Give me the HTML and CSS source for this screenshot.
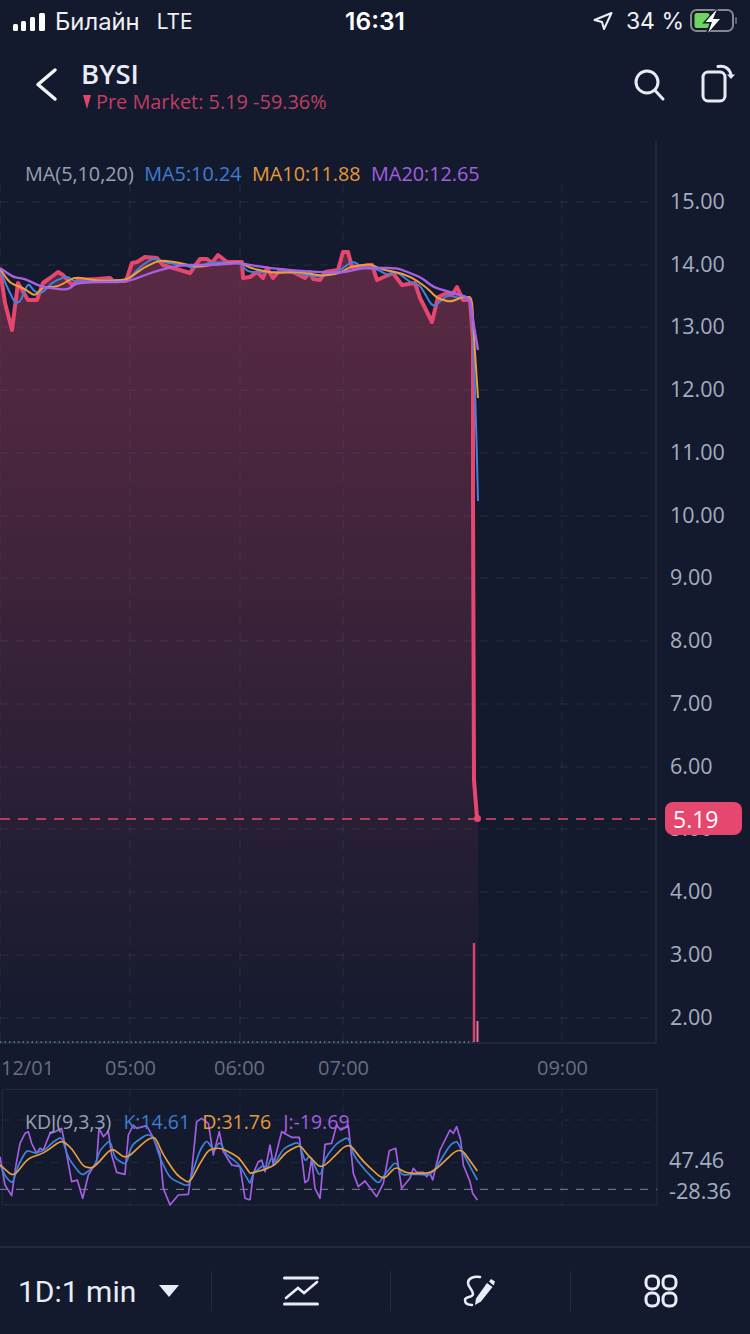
FILE: index.html
```html
<!DOCTYPE html>
<html lang="en">
<head>
    <meta charset="UTF-8">
    <meta name="viewport" content="width=device-width, initial-scale=1.0">
    <title>BYSI Chart</title>
    <link rel="stylesheet" href="styles.css">
</head>
<body>
    <div class="app">
        <div class="status-bar">
            <div class="status-left">
                <svg class="signal" width="36" height="24" viewBox="0 0 36 24">
                    <rect x="1" y="15" width="5" height="7" rx="1.5"/>
                    <rect x="9" y="12" width="5" height="10" rx="1.5"/>
                    <rect x="18" y="8" width="5" height="14" rx="1.5"/>
                    <rect x="27" y="4" width="6" height="18" rx="1.5"/>
                </svg>
                <span class="carrier">Билайн</span>
                <span class="network">LTE</span>
            </div>
            <div class="clock">16:31</div>
            <div class="status-right">
                <svg class="location" width="20" height="20" viewBox="0 0 20 20">
                    <path d="M1.500 9 18.500 2 11 18 9 11z"/>
                </svg>
                <span class="battery-text">34 %</span>
                <svg class="battery" width="48" height="26" viewBox="0 0 48 26">
                    <rect x="1" y="2" width="42" height="21" rx="5.5" class="battery-case"/>
                    <rect x="4.5" y="5" width="15" height="15" rx="2.5" class="battery-level"/>
                    <path d="M27 1 14.500 14.500h6.500L17 25l13-14h-7z" class="battery-gap"/>
                    <path d="M27 1 15.500 14h6.500L18 25l12-14h-7z" class="battery-bolt"/>
                    <rect x="45" y="9" width="2" height="7" rx="1" class="battery-nub"/>
                </svg>
            </div>
        </div>

        <header class="header">
            <svg class="back" width="24" height="36" viewBox="0 0 24 36">
                <path d="M21 3 4 17.500 21 32"/>
            </svg>
            <div class="title-block">
                <div class="symbol">BYSI</div>
                <div class="quote"><span class="quote-arrow"></span>Pre Market: 5.19 -59.36%</div>
            </div>
            <div class="header-icons">
                <svg width="34" height="36" viewBox="0 0 34 36" class="icon-line">
                    <circle cx="13" cy="15" r="11"/>
                    <path d="M21 23.500 29 32"/>
                </svg>
                <svg width="36" height="40" viewBox="0 0 36 40" class="icon-line">
                    <rect x="2" y="9" width="22" height="29" rx="5"/>
                    <path d="M17 3.500C24 2 29 6 30 12"/>
                    <path d="M26 11.500h8L30 16z" class="icon-fill"/>
                </svg>
            </div>
        </header>

        <section class="chart">
            <div class="legend ma-legend">
                <span class="tone-label">MA(5,10,20)</span>
                <span class="tone-blue">MA5:10.24</span>
                <span class="tone-orange">MA10:11.88</span>
                <span class="tone-purple">MA20:12.65</span>
            </div>
            <svg class="chart-svg" width="750" height="945" viewBox="0 140 750 945">
                <defs>
                    <linearGradient id="areaFill" gradientUnits="userSpaceOnUse" x1="0" y1="240" x2="0" y2="1010">
                        <stop offset="0" stop-color="#5c2a44"/>
                        <stop offset="1" stop-color="#171b2f"/>
                    </linearGradient>
                </defs>

                <polygon fill="url(#areaFill)" points="0,269 5,303 12,330 18,283 28,300 37,300 43,283 50,278 58,272 63,275 72,285 78,280 97,279 110,278 113,281 126,281 132,263 137,262 145,257 157,258 163,265 180,270 190,273 200,259 207,259 212,263 218,255 227,262 242,262 243,278 250,277 257,272 263,278 267,268 273,278 280,270 293,272 305,278 310,272 313,279 320,280 325,272 338,270 343,252 348,252 352,267 372,265 377,280 393,273 402,285 415,283 420,298 432,322 438,297 447,293 452,295 457,287 463,300 470,300 473,340 473,500 474,780 478,818 478,1043 0,1043"/>

                <g class="grid">
                    <path d="M0 202H656M0 265H656M0 327H656M0 390H656M0 453H656M0 516H656M0 578H656M0 641H656M0 704H656M0 767H656M0 829H656M0 892H656M0 955H656M0 1018H656"/>
                    <path d="M0 185V1043M130 185V1043M240 185V1043M343 185V1043M562 185V1043"/>
                </g>
                <path class="frame" d="M656 140V1043H0"/>

                <path class="volume-dots" d="M0 1042H473"/>
                <path class="volume-big" d="M474 943V1042"/>
                <path class="volume-small" d="M477.500 1021V1042"/>

                <polyline class="line-price" points="0,269 5,303 12,330 18,283 28,300 37,300 43,283 50,278 58,272 63,275 72,285 78,280 97,279 110,278 113,281 126,281 132,263 137,262 145,257 157,258 163,265 180,270 190,273 200,259 207,259 212,263 218,255 227,262 242,262 243,278 250,277 257,272 263,278 267,268 273,278 280,270 293,272 305,278 310,272 313,279 320,280 325,272 338,270 343,252 348,252 352,267 372,265 377,280 393,273 402,285 415,283 420,298 432,322 438,297 447,293 452,295 457,287 463,300 470,300 473,340 473,500 474,780 477,818"/>
                <polyline class="smooth line-ma line-blue" points="0,269 7,287 15,303 20,302 28,283 35,292 42,293 53,282 67,276 75,282 93,281 113,280 127,281 140,267 153,258 167,263 183,265 193,268 213,262 240,263 248,272 270,272 293,272 317,277 337,272 353,261 363,268 377,269 387,275 397,272 410,282 420,285 433,308 447,295 460,298 470,298 473,330 476,420 478,501"/>
                <polyline class="smooth line-ma line-orange" points="0,269 10,283 23,288 35,296 43,287 57,287 75,277 100,281 127,280 143,268 160,260 180,263 197,267 213,265 240,262 250,268 273,273 300,272 323,276 340,273 350,267 370,264 383,270 397,272 413,278 427,288 437,298 450,302 463,297 472,297 474,337 478,398"/>
                <polyline class="smooth line-ma line-purple" points="0,268 13,277 25,279 42,287 67,290 77,283 97,282 127,282 153,272 180,265 213,265 240,263 250,265 270,268 300,271 340,273 363,268 397,268 410,273 422,278 433,287 453,293 470,298 473,320 478,350"/>

                <text class="axis-y" x="670" y="209">15.00</text>
                <text class="axis-y" x="670" y="272">14.00</text>
                <text class="axis-y" x="670" y="334">13.00</text>
                <text class="axis-y" x="670" y="397">12.00</text>
                <text class="axis-y" x="670" y="460">11.00</text>
                <text class="axis-y" x="670" y="523">10.00</text>
                <text class="axis-y" x="670" y="585">9.00</text>
                <text class="axis-y" x="670" y="648">8.00</text>
                <text class="axis-y" x="670" y="711">7.00</text>
                <text class="axis-y" x="670" y="774">6.00</text>
                <text class="axis-y" x="670" y="836">5.00</text>
                <text class="axis-y" x="670" y="899">4.00</text>
                <text class="axis-y" x="670" y="962">3.00</text>
                <text class="axis-y" x="670" y="1025">2.00</text>

                <text class="axis-x" x="1" y="1075">12/01</text>
                <text class="axis-x" x="105" y="1075">05:00</text>
                <text class="axis-x" x="214" y="1075">06:00</text>
                <text class="axis-x" x="318" y="1075">07:00</text>
                <text class="axis-x" x="537" y="1075">09:00</text>

                <path class="last-line" d="M0 819H656"/>
                <circle class="last-dot" cx="477.500" cy="818.500" r="3.500"/>
                <rect class="last-tag" x="665" y="802" width="77" height="33" rx="8"/>
                <text class="last-text" x="673" y="828">5.19</text>
            </svg>
        </section>

        <section class="kdj">
            <div class="legend kdj-legend">
                <span class="tone-label">KDJ(9,3,3)</span>
                <span class="tone-blue">K:14.61</span>
                <span class="tone-orange">D:31.76</span>
                <span class="tone-purple">J:-19.69</span>
            </div>
            <svg class="kdj-svg" width="750" height="130" viewBox="0 0 2250 390">
                <path class="kdj-frame" d="M7 13H1971V360H7Z"/>
                <path class="kdj-grid" d="M7 105H1971M7 232H1971"/>
                <path class="kdj-grid" d="M390 13V360M720 13V360M1029 13V360M1686 13V360"/>
                <path class="kdj-zero" d="M0 313H1971"/>

                <polyline class="kdj-line kdj-j" points="0,215 15,300 35,332 48,240 60,175 75,145 85,140 95,175 110,205 120,190 130,195 150,145 165,140 185,130 195,180 215,290 232,285 248,340 265,270 290,230 297,130 310,155 325,140 335,210 350,262 375,268 385,150 400,120 410,130 440,122 458,155 480,205 490,310 510,360 535,330 565,328 575,260 590,110 605,100 625,115 640,210 658,140 670,200 695,240 720,245 735,340 750,345"/>
                <polyline class="smooth kdj-line kdj-k" points="0,240 20,280 38,295 55,240 80,195 105,205 135,195 160,170 185,155 205,220 245,272 270,255 285,240 300,195 330,165 345,220 378,240 395,180 440,148 460,155 480,220 510,280 565,305 575,270 600,195 620,165 640,195 660,170 680,210 715,235 750,295"/>
                <polyline class="smooth kdj-line kdj-d" points="0,240 40,275 85,220 130,205 185,165 215,190 250,245 280,250 335,188 378,222 440,165 465,155 490,210 530,270 568,295 600,235 625,195 660,188 715,215 750,265"/>

                <g transform="translate(750 0)">
                    <polyline class="kdj-line kdj-j" points="0,345 10,265 25,230 35,225 45,260 60,180 70,240 95,140 125,157 148,157 165,293 175,285 185,220 195,310 210,340 225,178 245,175 260,120 272,135 295,122 310,265 325,305 345,288 380,335 400,295 418,197 437,190 455,310 480,280 490,250 500,262 520,262 530,275 540,265 548,285 570,195 600,135 610,145 620,125 632,165 640,240 660,290 668,325 682,345"/>
                    <polyline class="smooth kdj-line kdj-k" points="0,295 10,265 40,240 50,255 65,215 75,235 100,190 140,172 150,180 165,230 180,210 210,278 225,220 260,175 295,155 310,210 340,250 385,297 400,275 437,228 455,270 490,268 545,270 600,180 620,168 632,190 655,235 682,285"/>
                    <polyline class="smooth kdj-line kdj-d" points="0,265 40,255 75,240 110,200 150,180 175,212 215,252 295,172 340,230 400,285 437,245 470,265 545,265 630,185 682,258"/>
                </g>

                <text class="kdj-axis" x="2007" y="249">47.46</text>
                <text class="kdj-axis" x="2007" y="342">-28.36</text>
            </svg>
        </section>

        <footer class="toolbar">
            <div class="period">
                <span>1D:1 min</span>
                <span class="period-arrow"></span>
            </div>
            <div class="tool">
                <svg width="36" height="30" viewBox="0 0 36 30" class="icon-line">
                    <path d="M1.500 2H34.500M1.500 28H34.500"/>
                    <path d="M3 22 15 12 21 17 34 6" class="thin"/>
                </svg>
            </div>
            <div class="tool">
                <svg width="36" height="32" viewBox="0 0 36 32">
                    <path class="squiggle" d="M17 2C11 1 5 3 5 8C5 12 10 15 10 19C10 23 2 21 2 25C2 29 5 30 9 30"/>
                    <path class="pencil" d="M12 30 13 23.500 24 8 29.500 12 18 26.500Z"/>
                    <path class="pencil" d="M26 6.500 28 4 32 6.500 31 9.500 30.500 10.500Z"/>
                </svg>
            </div>
            <div class="tool">
                <svg width="36" height="36" viewBox="0 0 36 36" class="icon-line">
                    <rect x="3" y="3" width="12.500" height="13" rx="5.500"/>
                    <rect x="20" y="3" width="13" height="13" rx="5.500"/>
                    <rect x="3" y="20" width="12.500" height="13" rx="5.500"/>
                    <rect x="20" y="20" width="13" height="13" rx="5.500"/>
                </svg>
            </div>
        </footer>
    </div>
    <script src="chart.js"></script>
</body>
</html>
```

FILE: styles.css
```css
* {
    box-sizing: border-box;
}

body {
    margin: 0;
    background-color: #141a2d;
    font-family: 'Open Sans', 'Noto Sans', sans-serif;
}

svg {
    display: block;
}

.app {
    width: 750px;
    height: 1334px;
    display: flex;
    flex-direction: column;
    overflow: hidden;
    background-color: #141a2d;
}

/* status bar */
.status-bar {
    height: 44px;
    display: grid;
    grid-template-columns: 1fr auto 1fr;
    align-items: center;
    padding: 0 12px 2px;
    font-family: Inter, 'Noto Sans', sans-serif;
    color: #eef0f5;
    font-size: 23px;
}

.status-left {
    display: flex;
    align-items: center;
}

.signal {
    fill: #fff;
    margin-right: 7px;
}

.carrier {
    font-size: 23.8px;
    margin-right: 17px;
}

.network {
    font-size: 21px;
}

.clock {
    font-weight: 600;
    font-size: 24.5px;
    color: #fff;
}

.status-right {
    display: flex;
    align-items: center;
    justify-content: flex-end;
}

.location {
    fill: none;
    stroke: #eef0f5;
    stroke-width: 2;
    stroke-linejoin: round;
    margin-right: 13px;
}

.battery-text {
    margin-right: 6px;
}

.battery-case {
    fill: none;
    stroke: #84878f;
    stroke-width: 2;
}

.battery-level {
    fill: #6ed35f;
}

.battery-gap {
    fill: #141a2d;
    stroke: #141a2d;
    stroke-width: 2;
}

.battery-bolt {
    fill: #fff;
}

.battery-nub {
    fill: #5e626c;
}

/* header */
.header {
    height: 96px;
    display: flex;
    padding: 10px 0 0 34px;
    align-items: flex-start;
}

.back {
    fill: none;
    stroke: #f2f4f8;
    stroke-width: 3.5;
    stroke-linecap: round;
    stroke-linejoin: round;
    margin: 13px 23px 0 0;
}

.title-block {
    flex: 1;
    padding-top: 2px;
}

.symbol {
    font-size: 27.5px;
    font-weight: 600;
    line-height: 35px;
    color: #e8ecf5;
}

.quote {
    display: flex;
    align-items: center;
    font-size: 19.9px;
    line-height: 22px;
    margin-left: 2px;
    color: #bf3e63;
}

.quote-arrow {
    width: 0;
    height: 0;
    border-left: 4.5px solid transparent;
    border-right: 4.5px solid transparent;
    border-top: 14px solid #e0466f;
    margin-right: 5px;
}

.header-icons {
    display: flex;
    gap: 33px;
    padding: 0 13px 0 0;
    margin-top: 9px;
    align-items: flex-end;
}

.icon-line {
    fill: none;
    stroke: #e8ecf7;
    stroke-width: 3;
    stroke-linecap: round;
}

.icon-line .thin {
    stroke-width: 2.6;
}

.icon-line .icon-fill {
    fill: #e8ecf7;
    stroke: none;
}

/* chart */
.chart {
    position: relative;
    height: 945px;
}

.legend {
    position: absolute;
    left: 25px;
    display: flex;
    line-height: 26px;
    white-space: nowrap;
}

.ma-legend {
    top: 21px;
    gap: 10.5px;
    font-size: 19.8px;
}

.kdj-legend {
    top: 24px;
    gap: 12px;
    font-size: 19.5px;
    z-index: 1;
}

.tone-label {
    color: #98a0b3;
}

.tone-blue {
    color: #3f7dcf;
}

.tone-orange {
    color: #e2993c;
}

.tone-purple {
    color: #a25fe0;
}

.grid path {
    fill: none;
    stroke: rgba(150, 160, 190, 0.14);
    stroke-width: 1;
    stroke-dasharray: 8 8;
}

.frame {
    fill: none;
    stroke: #2f3549;
    stroke-width: 1;
}

.volume-dots {
    stroke: #6fb7b8;
    stroke-width: 1.5;
    stroke-dasharray: 1.500 3;
    opacity: 0.7;
}

.volume-big {
    stroke: #d8436b;
    stroke-width: 2.5;
}

.volume-small {
    stroke: #e8739a;
    stroke-width: 2;
}

.line-price {
    fill: none;
    stroke: #e5476f;
    stroke-width: 4;
    stroke-linejoin: round;
}

.line-ma {
    fill: none;
    stroke-width: 2;
    stroke-linejoin: round;
}

.line-blue {
    stroke: #3f83dc;
}

.line-orange {
    stroke: #eb9e3d;
}

.line-purple {
    stroke: #a95fe6;
    stroke-width: 2.4;
}

.axis-y {
    font-size: 21.5px;
    fill: #a5adc0;
}

.axis-x {
    font-size: 20px;
    fill: #676e83;
}

.last-line {
    stroke: #e5476f;
    stroke-width: 1.5;
    stroke-dasharray: 10 8;
}

.last-dot,
.last-tag {
    fill: #e5476f;
}

.last-text {
    font-size: 23px;
    fill: #fff;
}

/* kdj panel */
.kdj {
    position: relative;
    height: 130px;
}

.kdj-frame {
    fill: none;
    stroke: #262c40;
    stroke-width: 3;
}

.kdj-grid {
    fill: none;
    stroke: rgba(150, 160, 190, 0.13);
    stroke-width: 3;
    stroke-dasharray: 24 24;
}

.kdj-zero {
    stroke: #7d8394;
    stroke-width: 3;
    stroke-dasharray: 24 24;
}

.kdj-line {
    fill: none;
    stroke-width: 5;
    stroke-linejoin: round;
}

.kdj-j {
    stroke: #a45fe4;
}

.kdj-k {
    stroke: #3f83dc;
}

.kdj-d {
    stroke: #eb9e3d;
}

.kdj-axis {
    font-size: 65px;
    fill: #a5adc0;
}

/* bottom toolbar */
.toolbar {
    margin-top: 31px;
    height: 88px;
    border-top: 2px solid #252b3f;
    display: grid;
    grid-template-columns: 211px 179px 180px 180px;
    align-items: center;
}

.period {
    height: 40px;
    display: flex;
    align-items: center;
    padding-left: 18px;
    font-family: Roboto, sans-serif;
    font-size: 30px;
    color: #e8ecf5;
    gap: 23px;
}

.period-arrow {
    width: 0;
    height: 0;
    border-left: 10px solid transparent;
    border-right: 10px solid transparent;
    border-top: 12px solid #e8ecf5;
}

.tool {
    height: 40px;
    display: flex;
    align-items: center;
    justify-content: center;
    border-left: 1px solid #252b3f;
}

.squiggle {
    fill: none;
    stroke: #e8ecf7;
    stroke-width: 2.5;
    stroke-linecap: round;
}

.pencil {
    fill: #e8ecf7;
}
```

FILE: chart.js
```js
// round the corners of the average lines, keeping the peaks where they are
const CORNER = 0.3;

document.querySelectorAll('polyline.smooth').forEach(line => {
    const pts = line.getAttribute('points').trim().split(/\s+/).map(p => p.split(',').map(Number));
    let d = `M${pts[0][0]} ${pts[0][1]}`;
    for (let i = 1; i < pts.length - 1; i++) {
        const [x, y] = pts[i];
        const [px, py] = pts[i - 1];
        const [nx, ny] = pts[i + 1];
        d += ` L${x + (px - x) * CORNER} ${y + (py - y) * CORNER}`;
        d += ` Q${x} ${y} ${x + (nx - x) * CORNER} ${y + (ny - y) * CORNER}`;
    }
    const last = pts[pts.length - 1];
    d += ` L${last[0]} ${last[1]}`;

    const path = document.createElementNS('http://www.w3.org/2000/svg', 'path');
    path.setAttribute('class', line.getAttribute('class'));
    path.setAttribute('d', d);
    line.replaceWith(path);
});
```
